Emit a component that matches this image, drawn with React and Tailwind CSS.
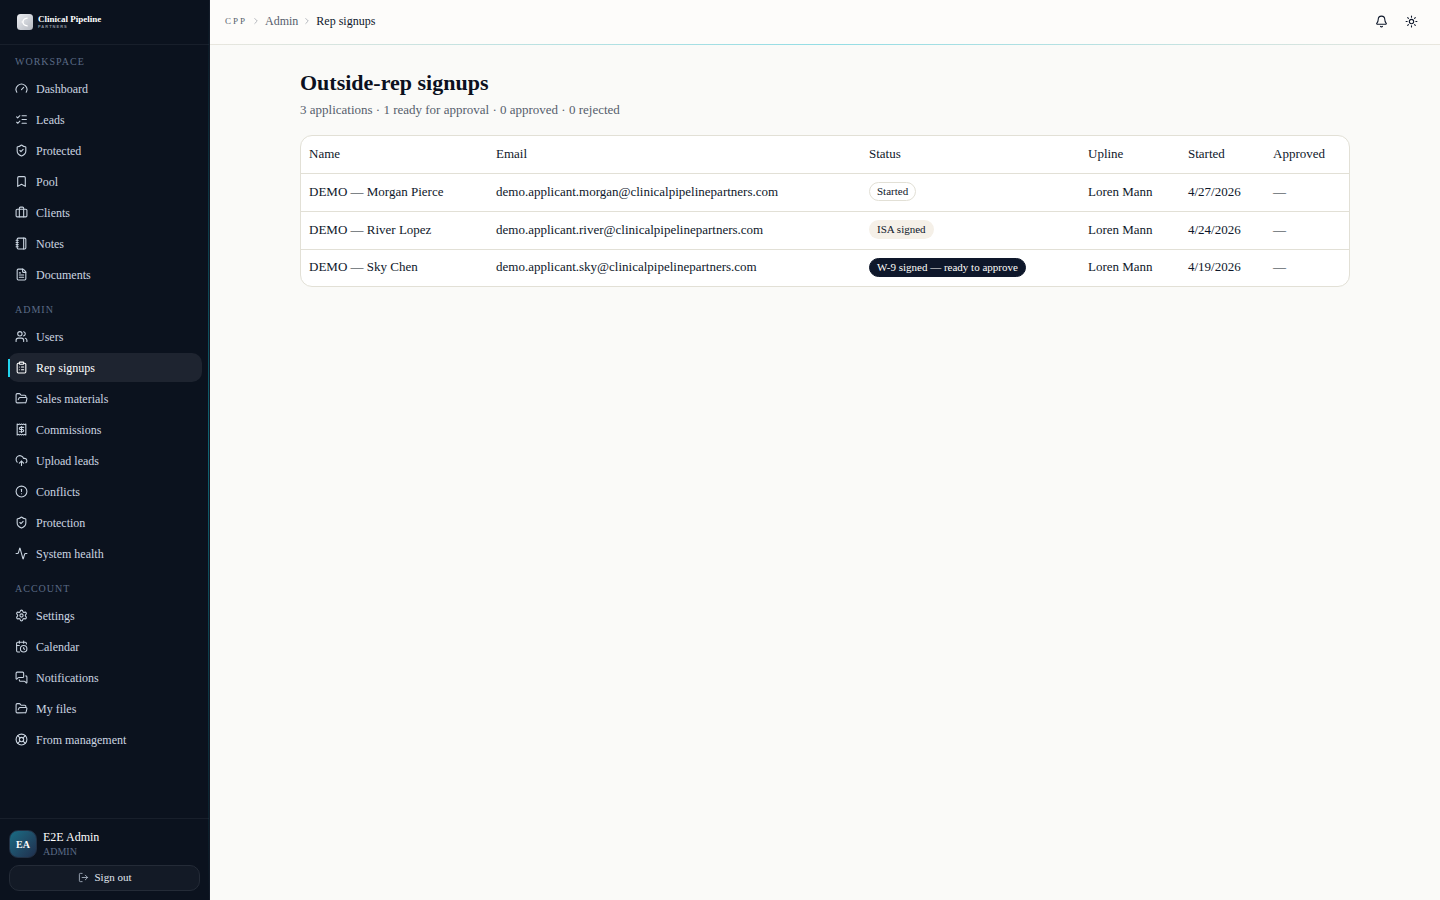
import {
  Activity, Bell, Bookmark, CalendarClock, ChevronRight, CircleAlert, ClipboardList, CloudUpload,
  FileText, FolderOpen, LifeBuoy, ListChecks, LogOut, MessagesSquare, Notebook, Settings,
  ShieldCheck, Sun, Users,
} from "lucide-react";

function BriefcaseIcon({ className, strokeWidth }) {
  return (
    <svg className={className} viewBox="0 0 24 24" fill="none" stroke="currentColor" strokeWidth={strokeWidth} strokeLinecap="round" strokeLinejoin="round" aria-hidden="true">
      <path d="M16 20V4a2 2 0 0 0-2-2h-4a2 2 0 0 0-2 2v16" />
      <rect width="20" height="14" x="2" y="6" rx="2" />
    </svg>
  );
}

function GaugeIcon({ className, strokeWidth }) {
  return (
    <svg className={className} viewBox="0 0 24 24" fill="none" stroke="currentColor" strokeWidth={strokeWidth} strokeLinecap="round" strokeLinejoin="round" aria-hidden="true">
      <path d="m12 14 4-4" />
      <path d="M3.34 19a10 10 0 1 1 17.32 0" />
    </svg>
  );
}

function ReceiptIcon({ className, strokeWidth }) {
  return (
    <svg className={className} viewBox="0 0 24 24" fill="none" stroke="currentColor" strokeWidth={strokeWidth} strokeLinecap="round" strokeLinejoin="round" aria-hidden="true">
      <path d="M4 2v20l2-1 2 1 2-1 2 1 2-1 2 1 2-1 2 1V2l-2 1-2-1-2 1-2-1-2 1-2-1-2 1Z" />
      <path d="M16 8h-6a2 2 0 1 0 0 4h4a2 2 0 1 1 0 4H8" />
      <path d="M12 17.5v-11" />
    </svg>
  );
}

const sections = [
  {
    title: "Workspace",
    items: [
      ["Dashboard", GaugeIcon],
      ["Leads", ListChecks],
      ["Protected", ShieldCheck],
      ["Pool", Bookmark],
      ["Clients", BriefcaseIcon],
      ["Notes", Notebook],
      ["Documents", FileText],
    ],
  },
  {
    title: "Admin",
    items: [
      ["Users", Users],
      ["Rep signups", ClipboardList],
      ["Sales materials", FolderOpen],
      ["Commissions", ReceiptIcon],
      ["Upload leads", CloudUpload],
      ["Conflicts", CircleAlert],
      ["Protection", ShieldCheck],
      ["System health", Activity],
    ],
  },
  {
    title: "Account",
    items: [
      ["Settings", Settings],
      ["Calendar", CalendarClock],
      ["Notifications", MessagesSquare],
      ["My files", FolderOpen],
      ["From management", LifeBuoy],
    ],
  },
];

const columns = [
  ["Name", "w-[187px]"],
  ["Email", "w-[373px]"],
  ["Status", "w-[219px]"],
  ["Upline", "w-[100px]"],
  ["Started", "w-[85px]"],
  ["Approved", "w-[84px]"],
];

const applicants = [
  { name: "DEMO — Morgan Pierce", email: "demo.applicant.morgan@clinicalpipelinepartners.com", status: "Started", tone: "outline", upline: "Loren Mann", started: "4/27/2026", approved: "—" },
  { name: "DEMO — River Lopez", email: "demo.applicant.river@clinicalpipelinepartners.com", status: "ISA signed", tone: "secondary", upline: "Loren Mann", started: "4/24/2026", approved: "—" },
  { name: "DEMO — Sky Chen", email: "demo.applicant.sky@clinicalpipelinepartners.com", status: "W-9 signed — ready to approve", tone: "solid", upline: "Loren Mann", started: "4/19/2026", approved: "—" },
];

const badgeTones = {
  outline: "border-[#e2e0d6] text-[#0e172a]",
  secondary: "border-transparent bg-[#f5f0e8] text-[#0e172a]",
  solid: "border-[#0e172a] bg-[#0e172a] text-[#fcfbf8]",
};

function Logo() {
  return (
    <a href="#" className="flex items-center gap-[5px]">
      <svg className="size-4" viewBox="0 0 16 16" aria-hidden="true">
        <defs>
          <linearGradient id="mark" x1="0" y1="0" x2="1" y2="1">
            <stop offset="0" stopColor="#eceef2" />
            <stop offset="1" stopColor="#b4b8c0" />
          </linearGradient>
        </defs>
        <rect width="16" height="16" rx="3.5" fill="url(#mark)" />
        <path d="M10.2 4.2C7.2 4.6 6 6.2 6 8s1.2 3.4 4.2 3.8" fill="none" stroke="#fff" strokeWidth="1.2" strokeLinecap="round" />
        <circle cx="5.2" cy="8" r="0.7" fill="#fff" />
      </svg>
      <span className="flex flex-col">
        <span className="text-[9px] leading-[10px] font-bold text-white">Clinical Pipeline</span>
        <span className="font-['Liberation_Sans'] text-[4px] leading-[6px] font-bold tracking-[1px] text-[#8b929e]">PARTNERS</span>
      </span>
    </a>
  );
}

function NavItem({ label, Icon, active }) {
  return (
    <li>
      <a
        href="#"
        aria-current={active ? "page" : undefined}
        className={
          active
            ? "relative flex h-[29px] items-center gap-2 rounded-[10px] bg-[#1e2430] px-[7px] text-[12px] font-medium text-white"
            : "relative flex h-[29px] items-center gap-2 rounded-[10px] px-[7px] text-[12px] font-medium text-[#cbd5e1]"
        }
      >
        {active && <span className="absolute top-[6px] left-0 h-[18px] w-[2px] bg-[#22d3ee]" />}
        <Icon className="size-[13px]" strokeWidth={2} />
        {label}
      </a>
    </li>
  );
}

function Sidebar() {
  return (
    <aside className="relative flex w-[210px] shrink-0 flex-col border-r border-[#151c29] bg-[#0b121e]">
      <div className="flex h-[45px] shrink-0 items-center border-b border-[#181f2b] px-[17px]">
        <Logo />
      </div>
      <nav className="flex flex-1 flex-col gap-[13px] pt-[9px] pr-[7px] pl-2">
        {sections.map((section) => (
          <section key={section.title}>
            <h2 className="mb-[5px] px-[7px] text-[10px] leading-[15px] tracking-[1px] text-[#5b6b86] uppercase">{section.title}</h2>
            <ul className="flex flex-col gap-[2px]">
              {section.items.map(([label, Icon]) => (
                <NavItem key={label} label={label} Icon={Icon} active={label === "Rep signups"} />
              ))}
            </ul>
          </section>
        ))}
      </nav>
      <div className="border-t border-[#181f2b] px-[9px] pt-[10px] pb-[9px]">
        <div className="flex items-center gap-[6px]">
          <span className="flex size-7 items-center justify-center rounded-[9px] border border-[#223044] bg-linear-to-br from-[#176d85] to-[#1e2f4d] text-[10px] font-bold text-white">EA</span>
          <span className="flex flex-col">
            <span className="text-[12px] leading-[16px] font-medium text-white">E2E Admin</span>
            <span className="text-[10px] leading-[14px] text-[#5b6b86]">ADMIN</span>
          </span>
        </div>
        <button type="button" className="mt-[6px] flex h-[26px] w-full items-center justify-center gap-[6px] rounded-[10px] border border-[#242b37] bg-[#131a26] pb-px text-[11px] font-medium text-[#e2e8f0]">
          <LogOut className="size-[11px] text-[#a3adbb]" />
          Sign out
        </button>
      </div>
      <div className="absolute inset-y-0 right-0 w-px bg-linear-to-b from-transparent via-[#0f6473] to-transparent" />
    </aside>
  );
}

function TopBar() {
  return (
    <header className="relative flex h-[45px] shrink-0 items-center justify-between border-b border-[#e8e6de] bg-[#fdfcfa] pr-[16px] pb-[2px] pl-[15px]">
      <nav aria-label="Breadcrumb" className="flex items-center gap-[4px] text-[12px] leading-[18px] text-[#565e6c]">
        <a href="#" className="text-[9px] tracking-[2px]">CPP</a>
        <ChevronRight className="size-[10px] text-[#a8acb3]" />
        <a href="#">Admin</a>
        <ChevronRight className="size-[10px] text-[#a8acb3]" />
        <span className="font-medium text-[#0e172a]">Rep signups</span>
      </nav>
      <div className="flex items-center gap-[4px] text-[#0e172a]">
        <button type="button" aria-label="Notifications" className="flex size-[26px] items-center justify-center">
          <Bell className="size-[13px]" />
        </button>
        <button type="button" aria-label="Toggle theme" className="flex size-[26px] items-center justify-center">
          <Sun className="size-[13px]" />
        </button>
      </div>
      <div className="absolute inset-x-0 -bottom-px h-px bg-linear-to-r from-transparent via-[#93dde5] to-transparent" />
    </header>
  );
}

export default function App() {
  return (
    <div className="flex min-h-screen bg-[#fafaf8] font-['Liberation_Serif',serif] text-[#0e172a]">
      <Sidebar />
      <div className="flex min-w-0 flex-1 flex-col">
        <TopBar />
        <main className="mx-auto w-full max-w-[1050px] flex-1 pt-[23px]">
          <h1 className="text-[22px] leading-[30px] font-bold text-[#0b1020]">Outside-rep signups</h1>
          <p className="mt-[2px] text-[13px] leading-[19px] text-[#565e6c]">3 applications · 1 ready for approval · 0 approved · 0 rejected</p>
          <div className="mt-[16px] overflow-hidden rounded-[12px] border border-[#e2e0d6] bg-white">
            <table className="w-full text-left text-[13px] leading-[19px]">
              <thead>
                <tr className="h-[37px] border-b border-[#e2e0d6]">
                  {columns.map(([heading, width]) => (
                    <th key={heading} scope="col" className={`px-2 pb-[2px] font-normal ${width}`}>{heading}</th>
                  ))}
                </tr>
              </thead>
              <tbody>
                {applicants.map((row) => (
                  <tr key={row.name} className="h-[38px] border-b border-[#e2e0d6] last:h-[37px] last:border-b-0">
                    <td className="px-2 pb-[2px]">{row.name}</td>
                    <td className="px-2 pb-[2px]">{row.email}</td>
                    <td className="px-2 pb-[2px]">
                      <span className={`inline-flex h-[19px] items-center rounded-full border px-[7px] align-middle text-[11px] font-medium ${badgeTones[row.tone]}`}>{row.status}</span>
                    </td>
                    <td className="px-2 pb-[2px]">{row.upline}</td>
                    <td className="px-2 pb-[2px]">{row.started}</td>
                    <td className="px-2 pb-[2px]">{row.approved}</td>
                  </tr>
                ))}
              </tbody>
            </table>
          </div>
        </main>
      </div>
    </div>
  );
}
